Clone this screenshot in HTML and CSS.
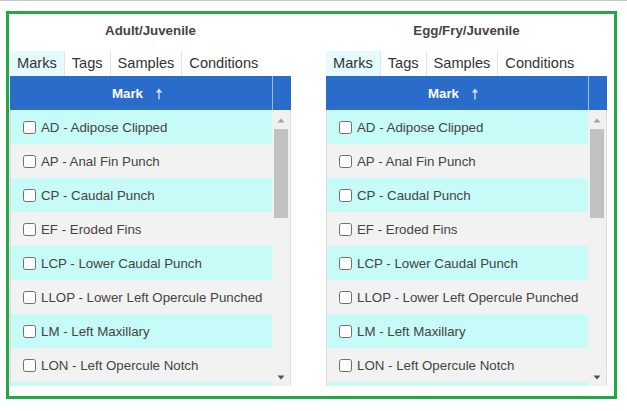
FILE: index.html
```html
<!DOCTYPE html>
<html lang="en">
<head>
<meta charset="utf-8">
<title>Marks</title>
<link rel="stylesheet" href="styles.css">
</head>
<body>
<div class="frame">
  <section class="panel">
    <h2 class="title">Adult/Juvenile</h2>
    <nav class="tabs">
      <span class="tab active">Marks</span>
      <span class="tab">Tags</span>
      <span class="tab">Samples</span>
      <span class="tab last">Conditions</span>
    </nav>
    <div class="grid">
      <div class="grid-head">
        <div class="head-cell">Mark
          <svg class="sort" width="8" height="12" viewBox="0 0 8 12"><path d="M4 0.5 L7.2 4.6 L0.8 4.6 Z" fill="#d6e6f8"/><rect x="3.35" y="4" width="1.3" height="7.5" fill="#d6e6f8"/></svg>
        </div>
        <div class="head-scroll"></div>
      </div>
      <div class="grid-body">
        <ul class="rows">
          <li class="row"><span class="cb"></span>AD - Adipose Clipped</li>
          <li class="row"><span class="cb"></span>AP - Anal Fin Punch</li>
          <li class="row"><span class="cb"></span>CP - Caudal Punch</li>
          <li class="row"><span class="cb"></span>EF - Eroded Fins</li>
          <li class="row"><span class="cb"></span>LCP - Lower Caudal Punch</li>
          <li class="row"><span class="cb"></span>LLOP - Lower Left Opercule Punched</li>
          <li class="row"><span class="cb"></span>LM - Left Maxillary</li>
          <li class="row"><span class="cb"></span>LON - Left Opercule Notch</li>
          <li class="row"></li>
        </ul>
        <div class="scrollbar">
          <div class="sb-btn up"><svg width="8" height="5" viewBox="0 0 8 5"><path d="M4 0.5 L7.5 4.5 L0.5 4.5 Z" fill="#a3a3a3"/></svg></div>
          <div class="thumb"></div>
          <div class="sb-space"></div>
          <div class="sb-btn down"><svg width="8" height="5" viewBox="0 0 8 5"><path d="M0.5 0.5 L7.5 0.5 L4 4.5 Z" fill="#505050"/></svg></div>
        </div>
      </div>
    </div>
  </section>

  <section class="panel">
    <h2 class="title">Egg/Fry/Juvenile</h2>
    <nav class="tabs">
      <span class="tab active">Marks</span>
      <span class="tab">Tags</span>
      <span class="tab">Samples</span>
      <span class="tab last">Conditions</span>
    </nav>
    <div class="grid">
      <div class="grid-head">
        <div class="head-cell">Mark
          <svg class="sort" width="8" height="12" viewBox="0 0 8 12"><path d="M4 0.5 L7.2 4.6 L0.8 4.6 Z" fill="#d6e6f8"/><rect x="3.35" y="4" width="1.3" height="7.5" fill="#d6e6f8"/></svg>
        </div>
        <div class="head-scroll"></div>
      </div>
      <div class="grid-body">
        <ul class="rows">
          <li class="row"><span class="cb"></span>AD - Adipose Clipped</li>
          <li class="row"><span class="cb"></span>AP - Anal Fin Punch</li>
          <li class="row"><span class="cb"></span>CP - Caudal Punch</li>
          <li class="row"><span class="cb"></span>EF - Eroded Fins</li>
          <li class="row"><span class="cb"></span>LCP - Lower Caudal Punch</li>
          <li class="row"><span class="cb"></span>LLOP - Lower Left Opercule Punched</li>
          <li class="row"><span class="cb"></span>LM - Left Maxillary</li>
          <li class="row"><span class="cb"></span>LON - Left Opercule Notch</li>
          <li class="row"></li>
        </ul>
        <div class="scrollbar">
          <div class="sb-btn up"><svg width="8" height="5" viewBox="0 0 8 5"><path d="M4 0.5 L7.5 4.5 L0.5 4.5 Z" fill="#a3a3a3"/></svg></div>
          <div class="thumb"></div>
          <div class="sb-space"></div>
          <div class="sb-btn down"><svg width="8" height="5" viewBox="0 0 8 5"><path d="M0.5 0.5 L7.5 0.5 L4 4.5 Z" fill="#505050"/></svg></div>
        </div>
      </div>
    </div>
  </section>
</div>
</body>
</html>
```

FILE: styles.css
```css
html, body {
  margin: 0;
  padding: 0;
  background: #ffffff;
}

body {
  border-top: 1px solid #c8c8c8;
  font-family: "Liberation Sans", Arial, sans-serif;
}

.frame {
  box-sizing: border-box;
  width: 611px;
  height: 388px;
  margin: 10px 0 0 6px;
  border: 3px solid #22a845;
  display: flex;
  gap: 35px;
  padding-left: 1px;
}

.panel {
  width: 281px;
  display: flex;
  flex-direction: column;
}

.title {
  margin: 0;
  padding: 9px 0 12px;
  font-size: 13.3px;
  line-height: 16px;
  font-weight: bold;
  color: #444444;
  text-align: center;
}

.tabs {
  display: flex;
  height: 25px;
  line-height: 25px;
  font-size: 14.6px;
  color: #333333;
}

.tab {
  padding: 0 7px;
  border-right: 1px solid #d7e9ee;
}

.tab.last {
  border-right: none;
}

.tab.active {
  background: #e4fafc;
}

.grid {
  display: flex;
  flex-direction: column;
}

.grid-head {
  display: flex;
  height: 34px;
  background: #296cc9;
}

.head-cell {
  flex: 1;
  display: flex;
  align-items: center;
  justify-content: center;
  gap: 12px;
  padding-right: 7px;
  color: #ffffff;
  font-weight: bold;
  font-size: 13.3px;
}

.sort {
  display: block;
  margin-top: 1px;
}

.head-scroll {
  width: 18px;
  border-left: 1px solid rgba(255, 255, 255, 0.55);
}

.grid-body {
  display: flex;
  height: 276px;
}

.rows {
  flex: 1;
  margin: 0;
  padding: 0;
  list-style: none;
  overflow: hidden;
  border-left: 1px solid #dcdcdc;
}

.row {
  height: 34px;
  display: flex;
  align-items: center;
  padding-left: 12px;
  font-size: 13.3px;
  color: #444444;
  white-space: nowrap;
  background: #c6fbf7;
}

.row:nth-child(even) {
  background: #f2f2f2;
}

.cb {
  box-sizing: border-box;
  width: 13px;
  height: 13px;
  border: 1px solid #6f6f6f;
  border-radius: 2.5px;
  background: #ffffff;
  margin-right: 5px;
  flex: none;
}

.scrollbar {
  width: 18px;
  background: #f1f1f1;
  border-right: 1px solid #dddddd;
  display: flex;
  flex-direction: column;
  align-items: center;
}

.sb-btn {
  width: 18px;
  display: flex;
  justify-content: center;
  align-items: center;
}

.sb-btn.up {
  height: 18px;
  padding-top: 2px;
  box-sizing: border-box;
}

.sb-btn.down {
  height: 17px;
}

.sb-btn svg {
  display: block;
}

.thumb {
  width: 14px;
  height: 89px;
  margin-top: 1px;
  background: #c1c1c1;
}

.sb-space {
  flex: 1;
}
```
